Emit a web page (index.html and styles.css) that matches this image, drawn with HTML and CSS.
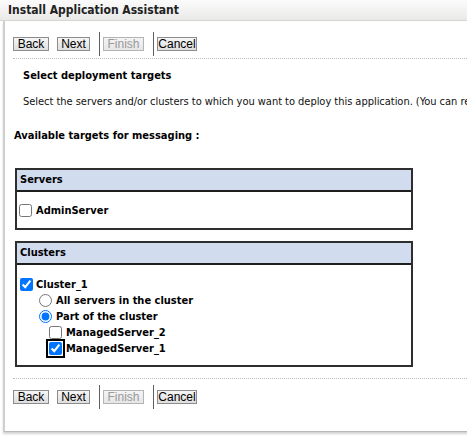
FILE: index.html
```html
<!DOCTYPE html>
<html>
<head>
<meta charset="utf-8">
<link rel="stylesheet" href="styles.css">
</head>
<body>
<div class="titlebar">Install Application Assistant</div>
<div class="panel">
  <div class="btnrow">
    <button class="btn b-back">Back</button>
    <button class="btn b-next">Next</button>
    <span class="sep"></span>
    <button class="btn b-finish" disabled>Finish</button>
    <span class="sep"></span>
    <button class="btn b-cancel">Cancel</button>
  </div>
  <div class="rule"></div>
  <div class="intro">
    <div class="heading">Select deployment targets</div>
    <div class="desc">Select the servers and/or clusters to which you want to deploy this application. (You can reconfigure deployment targets later).</div>
  </div>
  <div class="avail">Available targets for messaging :</div>
  <div class="box">
    <div class="box-head">Servers</div>
    <div class="box-body servers-body">
      <label class="row row-server"><input type="checkbox"><span>AdminServer</span></label>
    </div>
  </div>
  <div class="box clusters">
    <div class="box-head">Clusters</div>
    <div class="box-body clusters-body">
      <label class="row row-cluster"><input type="checkbox" checked><span>Cluster_1</span></label>
      <label class="row row-radio"><input type="radio" name="part"><span>All servers in the cluster</span></label>
      <label class="row row-radio"><input type="radio" name="part" checked><span>Part of the cluster</span></label>
      <label class="row row-member"><input type="checkbox"><span>ManagedServer_2</span></label>
      <label class="row row-member"><input type="checkbox" class="focused" checked><span>ManagedServer_1</span></label>
    </div>
  </div>
  <div class="rule rule-bottom"></div>
  <div class="btnrow btnrow-bottom">
    <button class="btn b-back">Back</button>
    <button class="btn b-next">Next</button>
    <span class="sep"></span>
    <button class="btn b-finish" disabled>Finish</button>
    <span class="sep"></span>
    <button class="btn b-cancel">Cancel</button>
  </div>
</div>
</body>
</html>
```

FILE: styles.css
```css
html, body {
  margin: 0;
  padding: 0;
  overflow: hidden;
  background: #fff;
}
body {
  width: 467px;
  height: 437px;
  font-family: "DejaVu Sans Condensed", "DejaVu Sans", sans-serif;
  font-size: 11px;
  color: #000;
}
.titlebar {
  height: 20px;
  line-height: 20px;
  padding-left: 8px;
  font-weight: bold;
  font-size: 12px;
  color: #222;
  background: linear-gradient(#fbfbfb, #e9eae8);
  border-bottom: 1px solid #d6d6d4;
}
.panel {
  margin-left: 3px;
  width: 640px;
  height: 411px;
  box-sizing: border-box;
  border-left: 2px solid #cfcfcf;
  border-bottom: 1px solid #b8b8b8;
  box-shadow: 0 2px 2px #d4d4d4;
  display: flex;
  flex-direction: column;
}
.btnrow {
  margin-top: 11px;
  padding-left: 8px;
  height: 24px;
  display: flex;
  align-items: center;
}
.btn {
  box-sizing: border-box;
  height: 14px;
  margin: 0;
  padding: 0;
  text-align: center;
  font-family: "Liberation Sans", Arial, sans-serif;
  font-size: 12px;
  line-height: 12px;
  color: #000;
  border: 1px solid #8c8c8c;
  border-radius: 0;
  background: linear-gradient(#f6f6f6, #dedede);
}
.b-back { width: 36px; }
.b-next { width: 33px; margin-left: 8px; }
.b-finish { width: 41px; color: #9a9a9a; border-color: #b4b4b4; background: linear-gradient(#f4f4f4, #e6e6e6); }
.b-cancel { width: 40px; }
.sep {
  width: 1px;
  height: 24px;
  background: #606060;
  margin: 0 3px 0 9px;
}
.rule {
  margin: 2px 0 0 8px;
  border-top: 1px dotted #bdbdbd;
}
.intro {
  padding-left: 18px;
  margin-top: 10px;
}
.heading {
  font-weight: bold;
  line-height: 14px;
}
.desc {
  margin-top: 12px;
  line-height: 14px;
  white-space: nowrap;
  letter-spacing: -0.03px;
  color: #111;
}
.avail {
  margin: 20px 0 0 9px;
  font-weight: bold;
  line-height: 14px;
}
.box {
  margin: 25px 0 0 10px;
  width: 398px;
  box-sizing: border-box;
  border: 2px solid #2e2e2e;
}
.clusters {
  margin-top: 11px;
}
.box-head {
  height: 20px;
  line-height: 20px;
  padding-left: 3px;
  background: #d1ddef;
  border-bottom: 2px solid #1e1e1e;
  font-weight: bold;
}
.servers-body {
  height: 36px;
  display: flex;
  align-items: center;
}
.clusters-body {
  height: 100px;
  padding-top: 11px;
  box-sizing: border-box;
}
.row {
  display: flex;
  align-items: center;
  height: 16px;
  font-weight: bold;
}
.row input {
  margin: 0;
  width: 13px;
  height: 13px;
}
.row-server { padding-left: 2px; }
.row-server input { margin-right: 4px; }
.row-cluster { padding-left: 3px; }
.row-cluster input { margin-right: 3px; }
.row-radio { padding-left: 22px; }
.row-radio input { margin-right: 4px; }
.row-member { padding-left: 32px; }
.row-member input { margin-right: 4px; }
.focused {
  outline: 2px solid #000;
  outline-offset: 1px;
  border-radius: 2px;
}
.rule-bottom {
  margin-top: 11px;
}
.btnrow-bottom {
  margin-top: 6px;
}
```
